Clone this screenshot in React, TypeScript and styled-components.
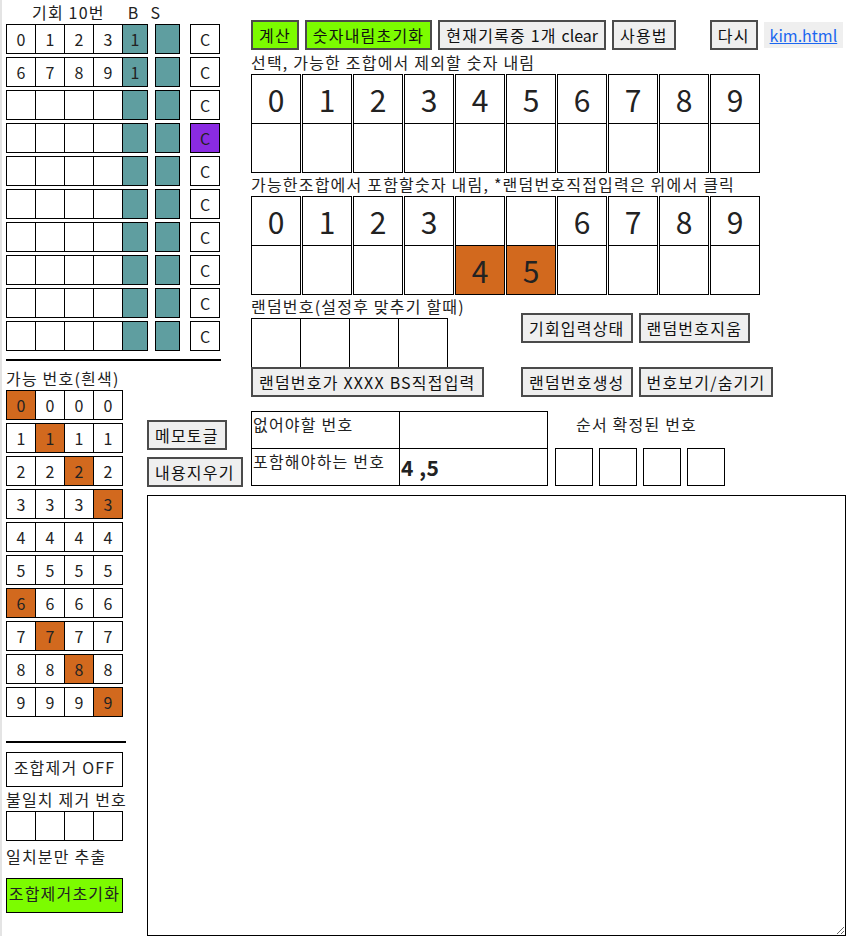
import React from "react";
import styled, { createGlobalStyle } from "styled-components";

const Global = createGlobalStyle`
  html, body { margin: 0; padding: 0; background: #fff; }
  body { font-family: "Noto Sans CJK KR", "Noto Sans", sans-serif; font-size: 16px; color: #222; letter-spacing: 1.2px; }
`;

const Page = styled.div`
  display: grid;
  grid-template-columns: 141px 104px 595px;
  grid-template-rows: 366px 129px auto;
  padding-left: 4px;
  border-left: 2px solid #e4e4e4;
  width: 842px;
  box-sizing: border-box;
`;

const ChanceBlock = styled.div`
  grid-column: 1 / 3;
  grid-row: 1;
`;

const ChanceHeader = styled.div`
  display: flex;
  height: 24px;
  line-height: 24px;
  padding-left: 26px;
`;

const HeadSpan = styled.span<{ $ml?: number }>`
  margin-left: ${(p) => p.$ml ?? 0}px;
`;

const Latin = styled.span`
  letter-spacing: 0;
`;

const RowStack = styled.div`
  display: flex;
  flex-direction: column;
  gap: 3px;
`;

const CellRow = styled.div`
  display: flex;
`;

const Cell = styled.div<{ $w?: number; $bg?: string; $ml?: number }>`
  box-sizing: border-box;
  width: ${(p) => p.$w ?? 30}px;
  height: 30px;
  border: 1px solid #000;
  background: ${(p) => p.$bg ?? "#fff"};
  margin-left: ${(p) => p.$ml ?? -1}px;
  text-align: center;
  line-height: 28px;
  font-size: 16px;
  letter-spacing: 0;
  color: #222;
  &:first-child { margin-left: 0; }
`;

const Rule = styled.div<{ $w: number; $mt: number }>`
  width: ${(p) => p.$w}px;
  height: 2px;
  background: #000;
  margin-top: ${(p) => p.$mt}px;
`;

const LeftCol = styled.div`
  grid-column: 1;
  grid-row: 2 / 4;
  display: flex;
  flex-direction: column;
`;

const Label = styled.div<{ $h?: number }>`
  height: ${(p) => p.$h ?? 24}px;
  line-height: ${(p) => p.$h ?? 24}px;
  white-space: nowrap;
  color: #222;
`;

const Box = styled.div<{ $bg?: string; $mt?: number }>`
  box-sizing: border-box;
  width: 117px;
  height: 35px;
  border: 1px solid #000;
  background: ${(p) => p.$bg ?? "#fff"};
  margin-top: ${(p) => p.$mt ?? 0}px;
  text-align: center;
  line-height: 26px;
  padding-top: 1px;
  white-space: nowrap;
  overflow: hidden;
`;

const MemoCol = styled.div`
  grid-column: 2;
  grid-row: 2;
  align-self: end;
  display: flex;
  flex-direction: column;
  align-items: flex-start;
  gap: 7px;
  margin-bottom: 8px;
`;

const Button = styled.button<{ $green?: boolean; $ml?: number }>`
  font-family: inherit;
  font-size: 16px;
  letter-spacing: 1.2px;
  line-height: 22px;
  height: 30px;
  padding: 2px 6px;
  border: 2px solid #4b4b4b;
  background: ${(p) => (p.$green ? "#7cfc00" : "#efefef")};
  color: #111;
  margin: 0;
  margin-left: ${(p) => p.$ml ?? 0}px;
  white-space: nowrap;
  box-sizing: border-box;
`;

const RightTop = styled.div`
  grid-column: 3;
  grid-row: 1 / 3;
  padding-top: 20px;
  display: flex;
  flex-direction: column;
`;

const Toolbar = styled.div`
  display: flex;
  align-items: center;
  gap: 6px;
`;

const LinkBox = styled.div`
  background: #efefef;
  height: 26px;
  line-height: 26px;
  padding: 0 6px;
  letter-spacing: 0;
  a { color: #1b66f0; text-decoration: underline; }
`;

const BigGrid = styled.div`
  display: flex;
  gap: 1px;
`;

const BigCol = styled.div`
  box-sizing: border-box;
  width: 50px;
  border: 1px solid #000;
  display: flex;
  flex-direction: column;
`;

const BigCell = styled.div<{ $bg?: string; $top?: boolean }>`
  height: 48px;
  line-height: 48px;
  text-align: center;
  font-size: 30px;
  letter-spacing: 0;
  color: #222;
  background: ${(p) => p.$bg ?? "#fff"};
  border-bottom: ${(p) => (p.$top ? "1px solid #000" : "none")};
`;

const RandomArea = styled.div`
  display: flex;
`;

const RandomLeft = styled.div`
  width: 228px;
  display: flex;
  flex-direction: column;
  align-items: flex-start;
`;

const RandomBoxes = styled.div`
  display: flex;
`;

const RandBox = styled.div`
  box-sizing: border-box;
  width: 50px;
  height: 49px;
  border: 1px solid #000;
  border-bottom: none;
  margin-left: -1px;
  &:first-child { margin-left: 0; }
`;

const RandomRight = styled.div`
  margin-left: 42px;
  padding-top: 18px;
  display: flex;
  flex-direction: column;
  gap: 24px;
`;

const BtnRow = styled.div`
  display: flex;
  gap: 6px;
`;

const InfoArea = styled.div`
  display: flex;
  align-items: flex-start;
  margin-top: 14px;
`;

const InfoTable = styled.table`
  border-collapse: collapse;
  td {
    border: 1px solid #000;
    width: 148px;
    height: 37px;
    vertical-align: top;
    padding: 1px 1px;
    font-size: 16px;
    line-height: 22px;
    box-sizing: border-box;
    white-space: nowrap;
  }
`;

const BoldCell = styled.td`
  && {
    font-weight: 700;
    font-size: 21px;
    line-height: 28px;
    padding-top: 4px;
    letter-spacing: 0.5px;
  }
`;

const OrderArea = styled.div`
  margin-left: 7px;
  display: flex;
  flex-direction: column;
`;

const OrderLabel = styled.div`
  height: 37px;
  line-height: 22px;
  padding-top: 2px;
  padding-left: 21px;
  box-sizing: border-box;
  white-space: nowrap;
`;

const OrderBoxes = styled.div`
  display: flex;
  gap: 6px;
`;

const OrderBox = styled.div`
  box-sizing: border-box;
  width: 38px;
  height: 38px;
  border: 1px solid #000;
`;

const Memo = styled.textarea`
  grid-column: 2 / 4;
  grid-row: 3;
  display: block;
  box-sizing: border-box;
  width: 699px;
  height: 441px;
  margin: 0;
  border: 1px solid #000;
  font-family: inherit;
`;

const TEAL = "#5f9ea0";
const ORANGE = "#d2691e";
const PURPLE = "#8a2be2";

const chanceRows: (string[] | null)[] = [
  ["0", "1", "2", "3", "1"],
  ["6", "7", "8", "9", "1"],
  null, null, null, null, null, null, null, null,
];

const orangeCol = (row: number) => (row < 4 ? row : row >= 6 ? row - 6 : -1);

export default function App() {
  const digits = ["0", "1", "2", "3", "4", "5", "6", "7", "8", "9"];
  return (
    <>
      <Global />
      <Page>
        <ChanceBlock>
          <ChanceHeader>
            <span>기회 10번</span>
            <HeadSpan $ml={23}>B</HeadSpan>
            <HeadSpan $ml={11}>S</HeadSpan>
          </ChanceHeader>
          <RowStack>
            {chanceRows.map((r, i) => (
              <CellRow key={i}>
                <Cell>{r ? r[0] : ""}</Cell>
                <Cell>{r ? r[1] : ""}</Cell>
                <Cell>{r ? r[2] : ""}</Cell>
                <Cell>{r ? r[3] : ""}</Cell>
                <Cell $w={26} $bg={TEAL}>{r ? r[4] : ""}</Cell>
                <Cell $w={25} $bg={TEAL} $ml={7}></Cell>
                <Cell $w={30} $ml={10} $bg={i === 3 ? PURPLE : "#fff"}>C</Cell>
              </CellRow>
            ))}
          </RowStack>
          <Rule $w={215} $mt={8} />
        </ChanceBlock>

        <LeftCol>
          <Label>가능 번호(흰색)</Label>
          <RowStack>
            {digits.map((d, i) => (
              <CellRow key={d}>
                {[0, 1, 2, 3].map((c) => (
                  <Cell key={c} $bg={orangeCol(i) === c ? ORANGE : "#fff"}>
                    {d}
                  </Cell>
                ))}
              </CellRow>
            ))}
          </RowStack>
          <Rule $w={120} $mt={24} />
          <Box $mt={9}>조합제거 OFF</Box>
          <Label>불일치 제거 번호</Label>
          <CellRow>
            <Cell />
            <Cell />
            <Cell />
            <Cell />
          </CellRow>
          <Label $h={30}>일치분만 추출</Label>
          <Box $mt={7} $bg="#7cfc00">조합제거초기화</Box>
        </LeftCol>

        <MemoCol>
          <Button>메모토글</Button>
          <Button>내용지우기</Button>
        </MemoCol>

        <RightTop>
          <Toolbar>
            <Button $green>계산</Button>
            <Button $green>숫자내림초기화</Button>
            <Button>
              현재기록중 1개 <Latin>clear</Latin>
            </Button>
            <Button>사용법</Button>
            <Button $ml={28}>다시</Button>
            <LinkBox>
              <a href="#">kim.html</a>
            </LinkBox>
          </Toolbar>
          <Label>선택, 가능한 조합에서 제외할 숫자 내림</Label>
          <BigGrid>
            {digits.map((d) => (
              <BigCol key={d}>
                <BigCell $top>{d}</BigCell>
                <BigCell />
              </BigCol>
            ))}
          </BigGrid>
          <Label $h={23}>가능한조합에서 포함할숫자 내림, *랜덤번호직접입력은 위에서 클릭</Label>
          <BigGrid>
            {digits.map((d) => {
              const down = d === "4" || d === "5";
              return (
                <BigCol key={d}>
                  <BigCell $top>{down ? "" : d}</BigCell>
                  <BigCell $bg={down ? ORANGE : "#fff"}>{down ? d : ""}</BigCell>
                </BigCol>
              );
            })}
          </BigGrid>
          <RandomArea>
            <RandomLeft>
              <Label $h={23}>랜덤번호(설정후 맞추기 할때)</Label>
              <RandomBoxes>
                <RandBox />
                <RandBox />
                <RandBox />
                <RandBox />
              </RandomBoxes>
              <Button>랜덤번호가 XXXX BS직접입력</Button>
            </RandomLeft>
            <RandomRight>
              <BtnRow>
                <Button>기회입력상태</Button>
                <Button>랜덤번호지움</Button>
              </BtnRow>
              <BtnRow>
                <Button>랜덤번호생성</Button>
                <Button>번호보기/숨기기</Button>
              </BtnRow>
            </RandomRight>
          </RandomArea>
          <InfoArea>
            <InfoTable>
              <tbody>
                <tr>
                  <td>없어야할 번호</td>
                  <td></td>
                </tr>
                <tr>
                  <td>포함해야하는 번호</td>
                  <BoldCell>4 ,5</BoldCell>
                </tr>
              </tbody>
            </InfoTable>
            <OrderArea>
              <OrderLabel>순서 확정된 번호</OrderLabel>
              <OrderBoxes>
                <OrderBox />
                <OrderBox />
                <OrderBox />
                <OrderBox />
              </OrderBoxes>
            </OrderArea>
          </InfoArea>
        </RightTop>

        <Memo />
      </Page>
    </>
  );
}
